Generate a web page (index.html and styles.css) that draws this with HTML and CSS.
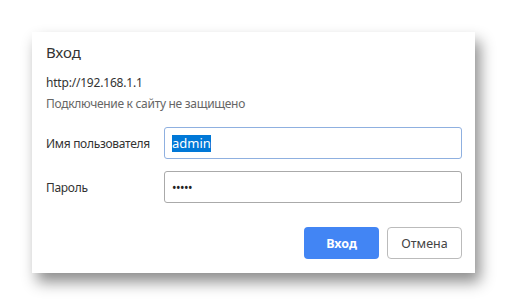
FILE: index.html
```html
<!DOCTYPE html>
<html lang="ru">
<head>
    <meta charset="UTF-8">
    <meta name="viewport" content="width=device-width, initial-scale=1.0">
    <title>Вход</title>
    <link rel="stylesheet" href="styles.css">
</head>
<body>

    <div class="dialog">
        <div class="title">Вход</div>
        <div class="origin">http://192.168.1.1</div>
        <div class="warning">Подключение к сайту не защищено</div>

        <div class="form">
            <label class="label" for="user">Имя пользователя</label>
            <div class="field focused" id="user"><span class="selected">admin</span></div>
            <label class="label" for="pass">Пароль</label>
            <div class="field" id="pass"><span class="dots">•••••</span></div>
        </div>

        <div class="buttons">
            <button class="primary">Вход</button>
            <button class="secondary">Отмена</button>
        </div>
    </div>

</body>
</html>
```

FILE: styles.css
```css
body {
    font-family: "Noto Sans", "Open Sans", sans-serif;
    background-color: #fff;
    margin: 0;
    padding: 32px;
    color: #222;
}
.dialog {
    width: 443px;
    height: 241px;
    box-sizing: border-box;
    background-color: #fff;
    padding: 10px 13px 0 14px;
    box-shadow: 5px 9px 14px rgba(0, 0, 0, 0.45);
}
.title {
    font-size: 15px;
    line-height: 20px;
    color: #333;
}
.origin {
    font-size: 12px;
    line-height: 17px;
    margin-top: 12px;
    color: #333;
    letter-spacing: -0.2px;
}
.warning {
    font-size: 12px;
    line-height: 17px;
    margin-top: 4px;
    color: #666;
    letter-spacing: -0.3px;
}
.form {
    display: grid;
    grid-template-columns: 118px 1fr;
    align-items: center;
    row-gap: 12px;
    margin-top: 15px;
}
.label {
    font-size: 12px;
    color: #333;
    letter-spacing: -0.3px;
}
.field {
    height: 32px;
    box-sizing: border-box;
    border: 1px solid #aaa;
    border-radius: 3px;
    padding: 0 7px;
    display: flex;
    align-items: center;
    font-size: 13px;
}
.field.focused {
    border-color: #8fb0e0;
}
.selected {
    background-color: #0078d7;
    color: #fff;
    line-height: 17px;
}
.dots {
    font-size: 12px;
    letter-spacing: -0.5px;
    color: #222;
}
.buttons {
    display: flex;
    justify-content: flex-end;
    gap: 8px;
    margin-top: 24px;
}
button {
    width: 75px;
    height: 32px;
    border-radius: 4px;
    font-family: inherit;
    font-size: 12.5px;
    cursor: pointer;
}
.primary {
    background-color: #4285f4;
    border: none;
    color: #fff;
    font-weight: bold;
}
.secondary {
    background-color: #fff;
    border: 1px solid #bbb;
    color: #444;
}
```
